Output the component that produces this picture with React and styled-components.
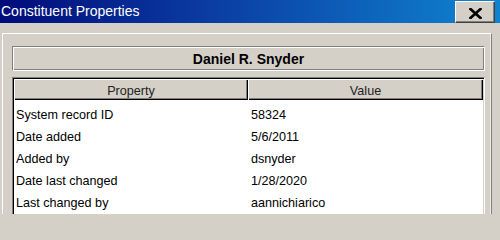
import React from "react";
import styled, { createGlobalStyle } from "styled-components";

const GlobalStyle = createGlobalStyle`
  html, body { margin: 0; padding: 0; background: #d4d0c8; }
  body { font-family: "Liberation Sans", Arial, sans-serif; }
`;

const Window = styled.div`
  width: 500px;
  height: 214px;
  overflow: hidden;
  background: #d4d0c8;
  display: flex;
  flex-direction: column;
`;

const TitleBar = styled.div`
  height: 23px;
  flex: none;
  display: flex;
  align-items: center;
  justify-content: space-between;
  padding: 0 5px 0 1px;
  background: linear-gradient(to right, #000c7a 0%, #0a3aa0 40%, #1084d0 100%);
  box-sizing: border-box;
`;

const Title = styled.span`
  color: #ffffff;
  font-size: 14px;
  line-height: 23px;
  white-space: nowrap;
`;

const CloseButton = styled.div`
  align-self: flex-start;
  margin-top: 1px;
  width: 40px;
  height: 22px;
  box-sizing: border-box;
  background: #d4d0c8;
  border-top: 1px solid #ffffff;
  border-left: 1px solid #ffffff;
  border-right: 1px solid #404040;
  border-bottom: 1px solid #404040;
  box-shadow: inset -1px -1px 0 #808080;
  display: flex;
  align-items: center;
  justify-content: center;
  padding-top: 2px;
`;

const Body = styled.div`
  flex: 1;
  padding: 10px 0 0 2px;
`;

const Panel = styled.div`
  width: 490px;
  height: 100%;
  box-sizing: border-box;
  border-top: 1px solid #ffffff;
  border-left: 1px solid #ffffff;
  border-right: 1px solid #808080;
  box-shadow: inset -1px 0 0 #ecebe6;
  padding: 12px 6px 0 9px;
  display: flex;
  flex-direction: column;
  gap: 6px;
`;

const NameBox = styled.div`
  height: 25px;
  box-sizing: border-box;
  border-top: 1px solid #808080;
  border-left: 1px solid #808080;
  border-right: 1px solid #ffffff;
  border-bottom: 1px solid #ffffff;
  box-shadow: inset 1px 1px 0 #ffffff, inset -1px -1px 0 #808080;
  display: flex;
  align-items: center;
  justify-content: center;
  font-weight: bold;
  font-size: 14px;
  color: #000;
`;

const ListView = styled.div`
  flex: 1;
  box-sizing: border-box;
  border-top: 1px solid #808080;
  border-left: 1px solid #808080;
  border-right: 1px solid #ffffff;
  border-bottom: 1px solid #ffffff;
  box-shadow: inset 1px 1px 0 #000000, inset -1px -1px 0 #d4d0c8;
  padding: 1px;
  background: #ffffff;
  display: flex;
  flex-direction: column;
`;

const Columns = styled.div`
  display: grid;
  grid-template-columns: 234px 235px;
`;

const HeaderCell = styled.div`
  height: 21px;
  box-sizing: border-box;
  background: #d4d0c8;
  box-shadow: inset 1px 1px 0 #ffffff, inset -1px -1px 0 #000000, inset -2px -2px 0 #808080;
  display: flex;
  align-items: center;
  justify-content: center;
  font-size: 12.6px;
  color: #222;
  padding-top: 2px;
`;

const Rows = styled.div`
  padding-top: 4px;
`;

const Cell = styled.div`
  height: 22px;
  line-height: 22px;
  font-size: 12.6px;
  color: #000;
  white-space: nowrap;
  padding-left: ${(p) => (p.$value ? "3px" : "2px")};
`;

const rows = [
  ["System record ID", "58324"],
  ["Date added", "5/6/2011"],
  ["Added by", "dsnyder"],
  ["Date last changed", "1/28/2020"],
  ["Last changed by", "aannichiarico"],
];

export default function App() {
  return (
    <>
      <GlobalStyle />
      <Window>
        <TitleBar>
          <Title>Constituent Properties</Title>
          <CloseButton>
            <svg width="13" height="11" viewBox="0 0 13 11">
              <path d="M1.5 1 L11.5 10 M11.5 1 L1.5 10" stroke="#000" strokeWidth="2.6" strokeLinecap="square" fill="none" />
            </svg>
          </CloseButton>
        </TitleBar>
        <Body>
          <Panel>
            <NameBox>Daniel R. Snyder</NameBox>
            <ListView>
              <Columns>
                <HeaderCell>Property</HeaderCell>
                <HeaderCell>Value</HeaderCell>
              </Columns>
              <Rows>
                {rows.map(([k, v]) => (
                  <Columns key={k}>
                    <Cell>{k}</Cell>
                    <Cell $value>{v}</Cell>
                  </Columns>
                ))}
              </Rows>
            </ListView>
          </Panel>
        </Body>
      </Window>
    </>
  );
}
